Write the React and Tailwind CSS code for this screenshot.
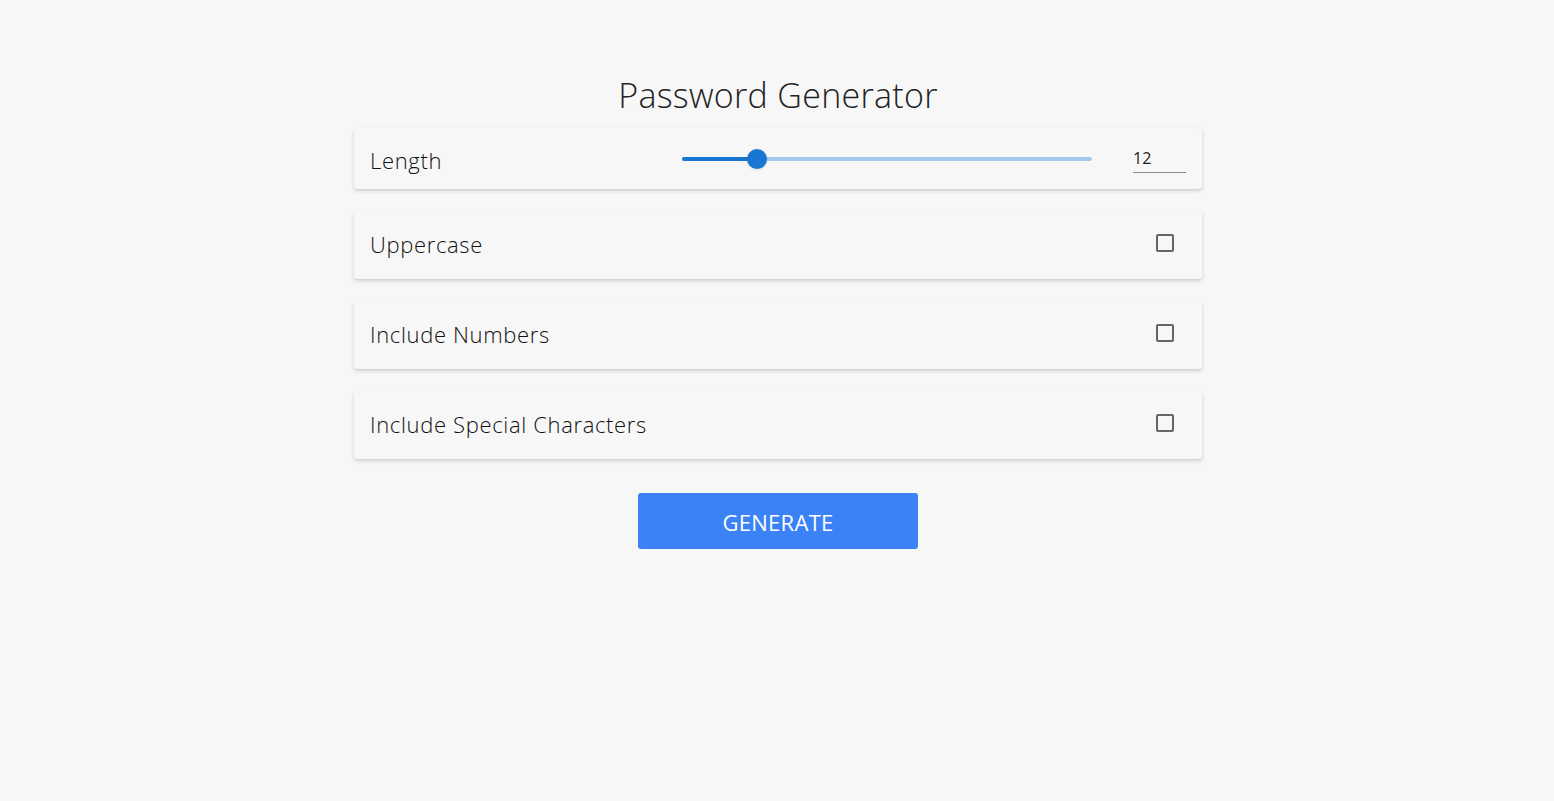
export default function App() {
  const rows = ["Uppercase", "Include Numbers", "Include Special Characters"];
  return (
    <div className="min-h-[801px] w-full bg-[#f7f7f7] flex flex-col items-center pl-[2px]" style={{ fontFamily: '"Open Sans", "Noto Sans", sans-serif' }}>
      <h1 className="mt-[72px] text-[34px] leading-[46px] font-light text-[#222] tracking-[0.3px]">Password Generator</h1>
      <div className="mt-[10px] w-[848px] flex flex-col gap-[22px]">
        <div className="h-[61px] bg-[#f7f7f7] rounded-[3px] shadow-[0_2px_4px_rgba(0,0,0,0.14),0_1px_2px_rgba(0,0,0,0.06)] flex items-center pl-4 pr-4">
          <span className="text-[22px] font-light text-[#111] tracking-[0.65px] w-[312px] mt-[3px]">Length</span>
          <div className="relative w-[410px] h-[20px] flex items-center">
            <div className="absolute left-0 right-0 h-[4px] rounded-full bg-[#a6c8ee]" />
            <div className="absolute left-0 w-[75px] h-[4px] rounded-full bg-[#1976d2]" />
            <div className="absolute left-[65px] w-[20px] h-[20px] rounded-full bg-[#1976d2] shadow-sm" />
          </div>
          <div className="ml-[41px] w-[53px] border-b border-[#8a8a8a] pb-[4px] mt-[4px] text-[16px] leading-[20px] text-[#222]">12</div>
        </div>
        {rows.map((r) => (
          <div key={r} className="h-[68px] bg-[#f7f7f7] rounded-[3px] shadow-[0_2px_4px_rgba(0,0,0,0.14),0_1px_2px_rgba(0,0,0,0.06)] flex items-center justify-between pl-4 pr-[28px]">
            <span className="text-[22px] font-light text-[#111] tracking-[0.65px] -mt-[2px]">{r}</span>
            <span className="w-[18px] h-[18px] border-2 border-[#666] rounded-[2px] -mt-[4px]" />
          </div>
        ))}
      </div>
      <button className="mt-[34px] w-[280px] h-[56px] bg-[#3b82f6] rounded-[3px] text-white text-[22px] tracking-[0.3px] pt-[3px]">GENERATE</button>
    </div>
  );
}
